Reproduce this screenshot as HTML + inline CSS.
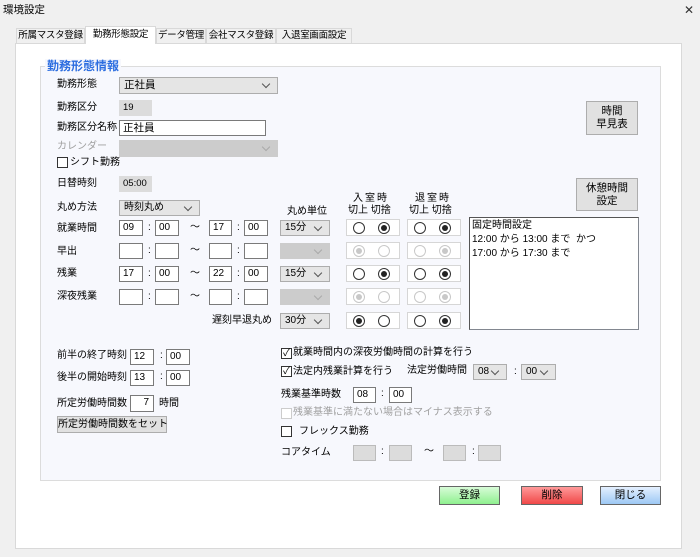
<!DOCTYPE html>
<html><head><meta charset="utf-8"><style>
*{box-sizing:border-box;margin:0;padding:0}
body{width:700px;height:557px;background:#f0f0f0;position:relative;overflow:hidden;font-family:"Liberation Sans","Noto Sans CJK JP",sans-serif;font-size:10px;color:#000}
.a{position:absolute;white-space:nowrap;line-height:14px}
.b{position:absolute;background:#fff;border:1px solid #7a7a7a;font-size:10px;line-height:14px;padding-left:3px;white-space:nowrap}
.g{position:absolute;background:#dcdcdc;border:1px solid #dcdcdc;font-size:9.5px;line-height:14px;padding-left:3px}
.c{position:absolute;background:#e5e5e5;border:1px solid #adadad;font-size:10px;line-height:14px;padding-left:4px;white-space:nowrap}
.c:after{content:"";position:absolute;right:8px;top:3px;width:5px;height:5px;border-right:1px solid #555;border-bottom:1px solid #555;transform:rotate(45deg)}
.cd{background:#cccccc;border-color:#cccccc}
.cd:after{border-color:#aaa}
.rg{position:absolute;width:54px;height:17px;border:1px solid #d6d6d6;background:#fff}
.r{position:absolute;top:2px;width:12px;height:12px;border-radius:50%;border:1px solid #333;background:#fff}
.r.on:after{content:"";position:absolute;left:2px;top:2px;width:6px;height:6px;border-radius:50%;background:#222}
.r.d{border-color:#c8c8c8}
.r.d.on:after{background:#c8c8c8}
.cb{position:absolute;width:11px;height:11px;border:1px solid #333;background:#fff}
.btn{position:absolute;background:#e1e1e1;border:1px solid #adadad;text-align:center;line-height:13px;font-size:10.5px;white-space:nowrap}
.tab{position:absolute;top:28px;height:15px;border:1px solid #d9d9d9;border-bottom:none;background:#f0f0f0;text-align:center;font-size:9.5px;line-height:14px;white-space:nowrap;overflow:hidden;letter-spacing:-0.3px}
</style></head><body>
<div class="a" style="left:3px;top:3px;font-size:10.5px">環境設定</div>
<div class="a" style="left:684px;top:3px;font-size:12px;color:#333">✕</div>
<div style="position:absolute;left:15px;top:43px;width:667px;height:506px;background:#fff;border:1px solid #d9d9d9"></div>
<div class="tab" style="left:16px;width:69px">所属マスタ登録</div>
<div class="tab" style="left:85px;top:26px;height:18px;width:71px;background:#fff;line-height:16px">勤務形態設定</div>
<div class="tab" style="left:156px;width:50px">データ管理</div>
<div class="tab" style="left:206px;width:70px">会社マスタ登録</div>
<div class="tab" style="left:276px;width:76px">入退室画面設定</div>
<div style="position:absolute;left:40px;top:66px;width:621px;height:415px;background:#f7f8fd;border:1px solid #dcdcdc"></div>
<div class="a" style="left:45px;top:59px;background:#f7f8fd;padding:0 2px;color:#2d6ee0;font-weight:bold;font-size:12px">勤務形態情報</div>

<div class="a" style="left:57px;top:78px">勤務形態</div>
<div class="c" style="left:119px;top:77px;width:159px;height:17px;font-size:10.5px">正社員</div>
<div class="a" style="left:57px;top:101px">勤務区分</div>
<div class="g" style="left:119px;top:100px;width:33px;height:16px">19</div>
<div class="a" style="left:57px;top:121px">勤務区分名称</div>
<div class="b" style="left:119px;top:120px;width:147px;height:16px;font-size:10.5px">正社員</div>
<div class="a" style="left:57px;top:140px;color:#a0a0a0">カレンダー</div>
<div class="c cd" style="left:119px;top:140px;width:159px;height:17px"></div>
<div class="cb" style="left:57px;top:157px"></div>
<div class="a" style="left:70px;top:156px">シフト勤務</div>
<div class="a" style="left:57px;top:177px">日替時刻</div>
<div class="g" style="left:119px;top:176px;width:33px;height:16px">05:00</div>
<div class="a" style="left:57px;top:201px">丸め方法</div>
<div class="c" style="left:119px;top:200px;width:81px;height:16px">時刻丸め</div>

<div class="a" style="left:287px;top:205px">丸め単位</div>
<div class="a" style="left:353px;top:192px;letter-spacing:2px">入室時</div>
<div class="a" style="left:348px;top:204px">切上 切捨</div>
<div class="a" style="left:415px;top:192px;letter-spacing:2px">退室時</div>
<div class="a" style="left:409px;top:204px">切上 切捨</div>

<div class="a" style="left:57px;top:222px">就業時間</div>
<div class="a" style="left:57px;top:245px">早出</div>
<div class="a" style="left:57px;top:267px">残業</div>
<div class="a" style="left:57px;top:290px">深夜残業</div>
<div class="a" style="left:212px;top:314px">遅刻早退丸め</div>

<div class="b" style="left:119px;top:220px;width:24px;height:16px">09</div><div class="a" style="left:148px;top:221px">:</div><div class="b" style="left:155px;top:220px;width:24px;height:16px">00</div><div class="a" style="left:190px;top:221px">～</div><div class="b" style="left:209px;top:220px;width:23px;height:16px">17</div><div class="a" style="left:237px;top:221px">:</div><div class="b" style="left:244px;top:220px;width:24px;height:16px">00</div>
<div class="b" style="left:119px;top:243px;width:24px;height:16px"></div><div class="a" style="left:148px;top:244px">:</div><div class="b" style="left:155px;top:243px;width:24px;height:16px"></div><div class="a" style="left:190px;top:244px">～</div><div class="b" style="left:209px;top:243px;width:23px;height:16px"></div><div class="a" style="left:237px;top:244px">:</div><div class="b" style="left:244px;top:243px;width:24px;height:16px"></div>
<div class="b" style="left:119px;top:266px;width:24px;height:16px">17</div><div class="a" style="left:148px;top:267px">:</div><div class="b" style="left:155px;top:266px;width:24px;height:16px">00</div><div class="a" style="left:190px;top:267px">～</div><div class="b" style="left:209px;top:266px;width:23px;height:16px">22</div><div class="a" style="left:237px;top:267px">:</div><div class="b" style="left:244px;top:266px;width:24px;height:16px">00</div>
<div class="b" style="left:119px;top:289px;width:24px;height:16px"></div><div class="a" style="left:148px;top:290px">:</div><div class="b" style="left:155px;top:289px;width:24px;height:16px"></div><div class="a" style="left:190px;top:290px">～</div><div class="b" style="left:209px;top:289px;width:23px;height:16px"></div><div class="a" style="left:237px;top:290px">:</div><div class="b" style="left:244px;top:289px;width:24px;height:16px"></div>

<div class="c" style="left:280px;top:220px;width:50px;height:16px">15分</div>
<div class="c cd" style="left:280px;top:243px;width:50px;height:16px"></div>
<div class="c" style="left:280px;top:266px;width:50px;height:16px">15分</div>
<div class="c cd" style="left:280px;top:289px;width:50px;height:16px"></div>
<div class="c" style="left:280px;top:313px;width:50px;height:16px">30分</div>

<div class="rg" style="left:346px;top:219px"><div class="r" style="left:6px"></div><div class="r on" style="left:31px"></div></div>
<div class="rg" style="left:407px;top:219px"><div class="r" style="left:6px"></div><div class="r on" style="left:31px"></div></div>
<div class="rg" style="left:346px;top:242px"><div class="r d on" style="left:6px"></div><div class="r d" style="left:31px"></div></div>
<div class="rg" style="left:407px;top:242px"><div class="r d" style="left:6px"></div><div class="r d on" style="left:31px"></div></div>
<div class="rg" style="left:346px;top:265px"><div class="r" style="left:6px"></div><div class="r on" style="left:31px"></div></div>
<div class="rg" style="left:407px;top:265px"><div class="r" style="left:6px"></div><div class="r on" style="left:31px"></div></div>
<div class="rg" style="left:346px;top:288px"><div class="r d on" style="left:6px"></div><div class="r d" style="left:31px"></div></div>
<div class="rg" style="left:407px;top:288px"><div class="r d" style="left:6px"></div><div class="r d on" style="left:31px"></div></div>
<div class="rg" style="left:346px;top:312px"><div class="r on" style="left:6px"></div><div class="r" style="left:31px"></div></div>
<div class="rg" style="left:407px;top:312px"><div class="r" style="left:6px"></div><div class="r on" style="left:31px"></div></div>

<div style="position:absolute;left:469px;top:217px;width:170px;height:113px;background:#fff;border:1px solid #828790;border-top-color:#555;border-left-color:#555;padding:1px 2px;font-size:10px;line-height:14px;white-space:nowrap">固定時間設定<br>12:00 から 13:00 まで&nbsp; かつ<br>17:00 から 17:30 まで</div>

<div class="btn" style="left:586px;top:101px;width:52px;height:34px;padding-top:3px">時間<br>早見表</div>
<div class="btn" style="left:576px;top:178px;width:62px;height:33px;padding-top:3px">休憩時間<br>設定</div>

<div class="a" style="left:57px;top:349px">前半の終了時刻</div>
<div class="b" style="left:130px;top:349px;width:24px;height:16px">12</div><div class="a" style="left:160px;top:349px">:</div><div class="b" style="left:166px;top:349px;width:24px;height:16px">00</div>
<div class="a" style="left:57px;top:371px">後半の開始時刻</div>
<div class="b" style="left:130px;top:370px;width:24px;height:16px">13</div><div class="a" style="left:160px;top:370px">:</div><div class="b" style="left:166px;top:370px;width:24px;height:16px">00</div>
<div class="a" style="left:57px;top:397px">所定労働時間数</div>
<div class="b" style="left:130px;top:395px;width:24px;height:17px;text-align:right;padding-right:4px">7</div>
<div class="a" style="left:159px;top:397px">時間</div>
<div class="btn" style="left:57px;top:416px;width:110px;height:17px;line-height:15px;font-size:10px">所定労働時間数をセット</div>

<div class="cb" style="left:281px;top:348px;font-size:10px;line-height:9px;text-align:center">✓</div>
<div class="a" style="left:293px;top:346px">就業時間内の深夜労働時間の計算を行う</div>
<div class="cb" style="left:281px;top:366px;font-size:10px;line-height:9px;text-align:center">✓</div>
<div class="a" style="left:293px;top:365px">法定内残業計算を行う</div>
<div class="a" style="left:407px;top:364px">法定労働時間</div>
<div class="c" style="left:473px;top:364px;width:34px;height:16px">08</div>
<div class="a" style="left:514px;top:365px">:</div>
<div class="c" style="left:521px;top:364px;width:35px;height:16px">00</div>
<div class="a" style="left:281px;top:388px">残業基準時数</div>
<div class="b" style="left:353px;top:387px;width:23px;height:16px">08</div><div class="a" style="left:381px;top:387px">:</div><div class="b" style="left:389px;top:387px;width:23px;height:16px">00</div>
<div class="cb" style="left:281px;top:408px;border-color:#ccc"></div>
<div class="a" style="left:293px;top:406px;color:#a0a0a0">残業基準に満たない場合はマイナス表示する</div>
<div class="cb" style="left:281px;top:426px"></div>
<div class="a" style="left:299px;top:425px">フレックス勤務</div>
<div class="a" style="left:281px;top:446px">コアタイム</div>
<div class="g" style="left:353px;top:445px;width:23px;height:16px;border-color:#bbb"></div><div class="a" style="left:381px;top:445px">:</div><div class="g" style="left:389px;top:445px;width:23px;height:16px;border-color:#bbb"></div>
<div class="a" style="left:424px;top:445px">～</div>
<div class="g" style="left:443px;top:445px;width:23px;height:16px;border-color:#bbb"></div><div class="a" style="left:472px;top:445px">:</div><div class="g" style="left:478px;top:445px;width:23px;height:16px;border-color:#bbb"></div>

<div class="btn" style="left:439px;top:486px;width:61px;height:19px;line-height:17px;border-color:#666;background:linear-gradient(#d8fcd8,#8ff08f)">登録</div>
<div class="btn" style="left:521px;top:486px;width:62px;height:19px;line-height:17px;border-color:#666;background:linear-gradient(#ff9a9a,#f04848)">削除</div>
<div class="btn" style="left:600px;top:486px;width:61px;height:19px;line-height:17px;border-color:#666;background:linear-gradient(#e4f0ff,#9dc8f4)">閉じる</div>
</body></html>
